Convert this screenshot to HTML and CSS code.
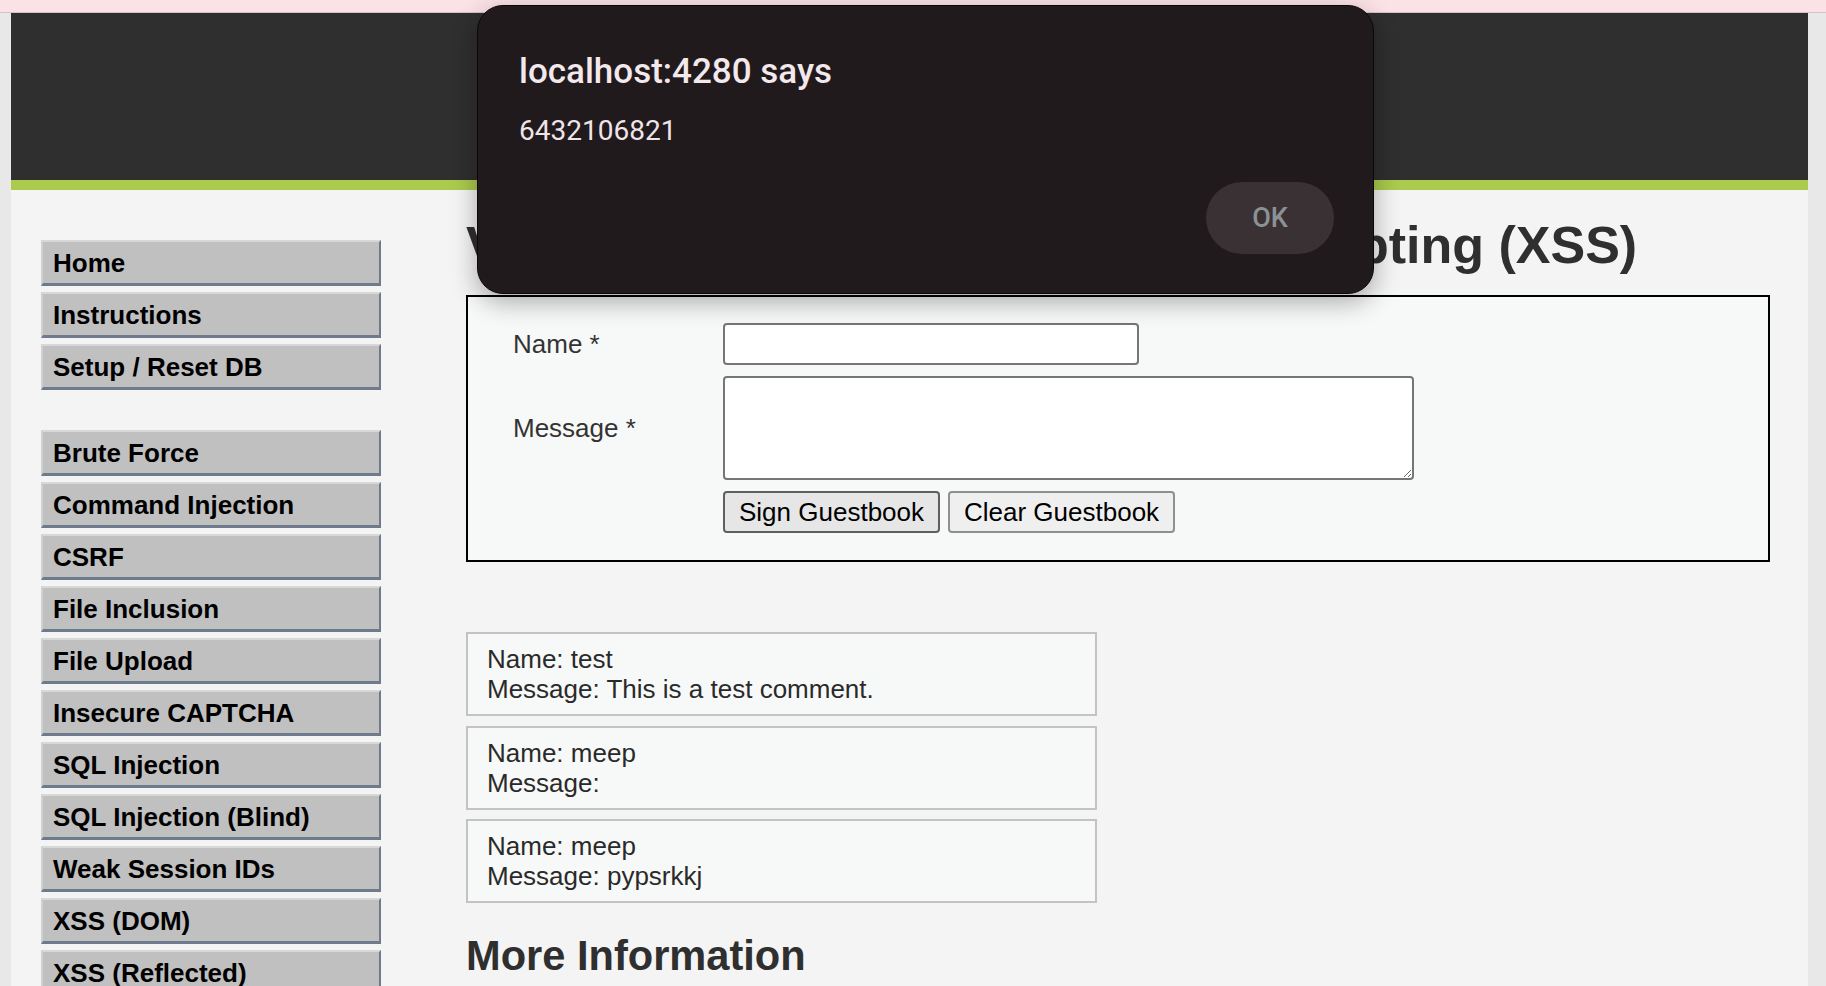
FILE: index.html
```html
<!DOCTYPE html>
<html lang="en">
<head>
<meta charset="utf-8">
<title>Vulnerability: Stored Cross Site Scripting (XSS)</title>
<link rel="stylesheet" href="styles.css">
</head>
<body>
<div class="topband"></div>
<div class="page">
  <div class="header"></div>
  <div class="layout">
    <nav class="sidebar">
      <ul class="menu">
        <li><a href="#">Home</a></li>
        <li><a href="#">Instructions</a></li>
        <li><a href="#">Setup / Reset DB</a></li>
      </ul>
      <ul class="menu menu-group">
        <li><a href="#">Brute Force</a></li>
        <li><a href="#">Command Injection</a></li>
        <li><a href="#">CSRF</a></li>
        <li><a href="#">File Inclusion</a></li>
        <li><a href="#">File Upload</a></li>
        <li><a href="#">Insecure CAPTCHA</a></li>
        <li><a href="#">SQL Injection</a></li>
        <li><a href="#">SQL Injection (Blind)</a></li>
        <li><a href="#">Weak Session IDs</a></li>
        <li><a href="#">XSS (DOM)</a></li>
        <li><a href="#">XSS (Reflected)</a></li>
        <li><a href="#">XSS (Stored)</a></li>
      </ul>
    </nav>
    <main class="content">
      <h1 class="title">Vulnerability: Stored Cross Site Scripting (XSS)</h1>
      <div class="vuln-area">
        <form class="guest-form">
          <label class="lbl">Name *</label>
          <div><input class="txt-name" type="text"></div>
          <label class="lbl">Message *</label>
          <div><textarea class="txt-msg"></textarea></div>
          <div></div>
          <div class="btns">
            <button type="button" class="btn btn-primary">Sign Guestbook</button>
            <button type="button" class="btn">Clear Guestbook</button>
          </div>
        </form>
      </div>
      <div class="comments">
        <div class="comment">Name: test<br>Message: This is a test comment.</div>
        <div class="comment">Name: meep<br>Message: </div>
        <div class="comment">Name: meep<br>Message: pypsrkkj</div>
      </div>
      <h2 class="subtitle">More Information</h2>
    </main>
  </div>
</div>

<div class="dialog">
  <div class="dlg-title">localhost:4280 says</div>
  <div class="dlg-msg">6432106821</div>
  <div class="dlg-actions"><button type="button" class="dlg-ok">OK</button></div>
</div>
</body>
</html>
```

FILE: styles.css
```css
html, body {
  margin: 0;
  padding: 0;
  overflow: hidden;
  height: 100%;
}
body {
  background: #e8e8e8;
  font-family: "Liberation Sans", Arial, sans-serif;
  font-size: 26px;
  color: #2f2f2f;
}
.topband {
  height: 12px;
  background: #fbe2e7;
  border-bottom: 1px solid #d9c1c6;
}
.page {
  margin: 0 18px 0 11px;
  background: #f4f4f4;
  min-height: 1200px;
}
.header {
  height: 167px;
  background: #2f2f2f;
  border-bottom: 10px solid #abca4e;
}
.layout {
  display: flex;
  align-items: flex-start;
}
.sidebar {
  width: 340px;
  padding: 50px 0 0 30px;
  flex: none;
}
.menu {
  list-style: none;
  margin: 0;
  padding: 0;
}
.menu-group {
  margin-top: 40px;
}
.menu li {
  margin-bottom: 6px;
}
.menu a {
  display: block;
  background: #c0c0c0;
  color: #000;
  font-weight: bold;
  text-decoration: none;
  line-height: 30px;
  padding: 6px 10px 5px;
  border-top: 2px solid #d8d8d8;
  border-left: 2px solid #d0d0d0;
  border-right: 2px solid #6f7b8c;
  border-bottom: 3px solid #6f7b8c;
}
.content {
  margin-left: 85px;
  flex: 1;
  padding-right: 38px;
}
.title {
  font-size: 52px;
  font-weight: bold;
  line-height: normal;
  margin: 25px 0 20px;
  color: #2f2f2f;
  white-space: nowrap;
}
.vuln-area {
  border: 2px solid #000;
  background: #f7f9f8;
  padding: 26px 46px 27px 45px;
}
.guest-form {
  display: grid;
  grid-template-columns: 210px auto;
  row-gap: 11px;
  align-items: center;
}
.lbl {
  color: #333;
}
.txt-name, .txt-msg {
  display: block;
  box-sizing: border-box;
  border: 2px solid #767676;
  border-radius: 4px;
  background: #fff;
  font: inherit;
  margin: 0;
}
.txt-name {
  width: 416px;
  height: 42px;
}
.txt-msg {
  width: 691px;
  height: 104px;
}
.btns {
  display: flex;
  gap: 8px;
}
.btn {
  box-sizing: border-box;
  height: 42px;
  padding: 0 14px;
  font-family: "Liberation Sans", Arial, sans-serif;
  font-size: 26px;
  color: #000;
  background: #efefef;
  border: 2px solid #8f8f8f;
  border-radius: 4px;
  margin: 0;
}
.btn-primary {
  background: #e6e6e6;
  border-color: #5f5f5f;
}
.comments {
  margin-top: 70px;
  display: flex;
  flex-direction: column;
  gap: 9.5px;
}
.comment {
  width: 631px;
  box-sizing: border-box;
  border: 2px solid #c3c3c3;
  background: #f7f9f8;
  line-height: 30px;
  padding: 10px 20px 10px 19px;
  color: #2a2a2a;
}
.subtitle {
  font-size: 41.6px;
  font-weight: bold;
  margin: 29px 0 0;
  line-height: normal;
  color: #2f2f2f;
}

/* alert dialog overlay */
.dialog {
  position: absolute;
  left: 477px;
  top: 5px;
  width: 897px;
  height: 289px;
  box-sizing: border-box;
  background: #211a1d;
  border: 1px solid #0c0809;
  border-radius: 26px;
  box-shadow: 0 8px 26px rgba(0, 0, 0, 0.32);
  padding: 0 39px 39px 41px;
  display: flex;
  flex-direction: column;
  font-family: Roboto, "Liberation Sans", sans-serif;
}
.dlg-title {
  color: #f3e8eb;
  font-size: 35px;
  font-weight: 500;
  line-height: 40px;
  margin-top: 46px;
}
.dlg-msg {
  color: #efe4e8;
  font-size: 28px;
  line-height: 32px;
  margin-top: 23px;
}
.dlg-actions {
  margin-top: auto;
  display: flex;
  justify-content: flex-end;
}
.dlg-ok {
  width: 128px;
  height: 72px;
  border: none;
  border-radius: 36px;
  background: #3a3135;
  color: #8c9196;
  font-family: Roboto, "Liberation Sans", sans-serif;
  font-size: 27px;
  font-weight: 500;
}
```
